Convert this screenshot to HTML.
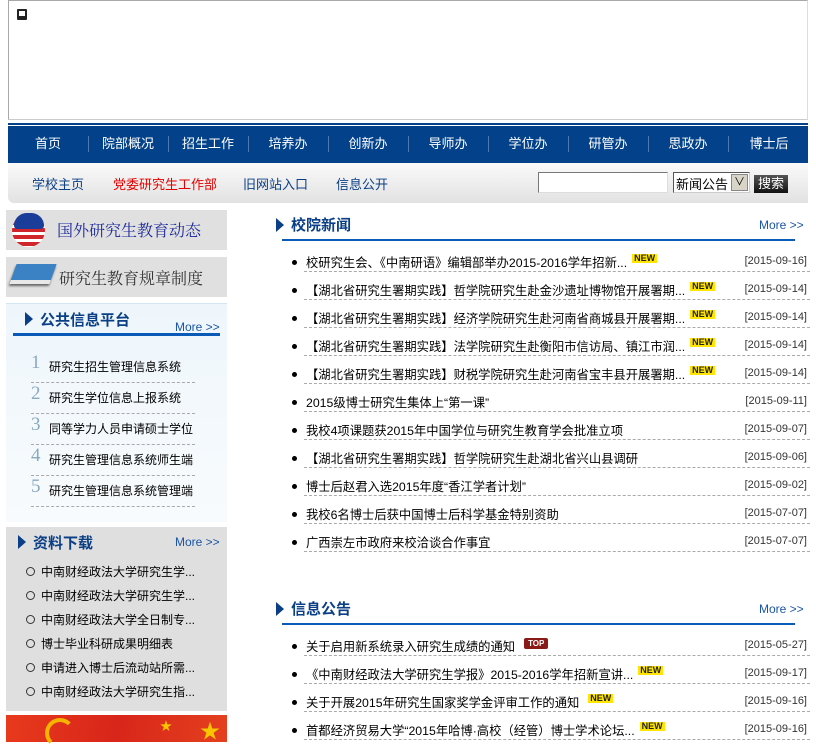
<!DOCTYPE html>
<html><head><meta charset="utf-8">
<style>
*{margin:0;padding:0;box-sizing:border-box}
body{width:816px;height:742px;overflow:hidden;background:#fff;font-family:"Liberation Sans","Noto Sans CJK SC",sans-serif;font-size:12px;color:#000;position:relative}
.a{position:absolute;white-space:nowrap}
.nav{position:absolute;left:8px;top:126px;width:800px;height:37px;background:#03428a;border-top:0}
.nav span{position:absolute;top:7px;color:#fff;font-size:13px;transform:translateX(-50%)}
.nav i{position:absolute;top:10px;width:1px;height:16px;background:#4d79ad}
.sub{position:absolute;left:8px;top:163px;width:800px;height:40px;background:linear-gradient(#fafafa,#e2e2e2);border-bottom-left-radius:6px}
.sub span{position:absolute;top:11px;font-size:13px;color:#0a3f86}
.hd{position:absolute;font-size:15px;font-weight:bold;color:#0a3f86}
.tri{position:absolute;width:0;height:0;border-top:7px solid transparent;border-bottom:7px solid transparent;border-left:8px solid #0a3f86}
.more{position:absolute;font-size:12px;color:#1a55a6}
.bl{position:absolute;height:3px;background:#0a5ab7}
.row{position:absolute;left:292px;width:518px;height:28px}
.row .dot{position:absolute;left:0;top:7px;width:5px;height:5px;border-radius:50%;background:#000}
.row .t{position:absolute;left:14px;top:0px;font-size:12.3px;white-space:nowrap}
.row .d{position:absolute;right:3px;top:2px;font-size:11px;color:#333}
.row .ln{position:absolute;left:12px;right:0;top:18px;border-top:1px dashed #aaa}
.new{display:inline-block;font-size:9px;font-weight:bold;font-style:normal;color:#222;background:#ffe500;line-height:9px;padding:0 2px;vertical-align:top;margin-left:5px;margin-top:1px}
.top{display:inline-block;font-size:8px;font-weight:bold;font-style:normal;color:#fff;background:#8a1a16;border-radius:2px;line-height:11px;padding:0 4px;vertical-align:top;margin-left:9px;margin-top:1px}
.pi{position:absolute;left:31px;width:164px;height:31px;border-bottom:1px dashed #aaa}
.pi b{position:absolute;left:0;top:0px;font-family:"Liberation Serif",serif;font-size:19px;font-weight:normal;color:#8aa9c0}
.pi span{position:absolute;left:18px;top:6px;font-size:12px}
.dl{position:absolute;left:26px;font-size:12px}
.dl::before{content:"";position:absolute;left:0;top:1px;width:7px;height:7px;border:1px solid #333;border-radius:50%}
.dl span{position:absolute;left:15px;top:-3px;white-space:nowrap}
</style></head><body>
<div class="a" style="left:8px;top:0;width:800px;height:120px;border:1px solid #a8a8a8;border-right-color:#ddd;border-bottom-color:#ccc"></div>
<div class="a" style="left:17px;top:9px;width:10px;height:11px;border:2px solid #222;border-bottom-width:4px;border-radius:1px"></div>
<div class="a" style="left:8px;top:123px;width:800px;height:2px;background:#03428a"></div>
<div class="nav">
<span style="left:40px">首页</span><i style="left:80px"></i>
<span style="left:120px">院部概况</span><i style="left:160px"></i>
<span style="left:200px">招生工作</span><i style="left:240px"></i>
<span style="left:280px">培养办</span><i style="left:320px"></i>
<span style="left:360px">创新办</span><i style="left:400px"></i>
<span style="left:440px">导师办</span><i style="left:480px"></i>
<span style="left:520px">学位办</span><i style="left:560px"></i>
<span style="left:600px">研管办</span><i style="left:640px"></i>
<span style="left:680px">思政办</span><i style="left:720px"></i>
<span style="left:761px">博士后</span>
</div>
<div class="sub">
<span style="left:24px">学校主页</span>
<span style="left:105px;color:#e60000">党委研究生工作部</span>
<span style="left:235px">旧网站入口</span>
<span style="left:328px">信息公开</span>
</div>
<div class="a" style="left:538px;top:172px;width:130px;height:21px;background:#fff;border:1px solid #777;border-right-color:#ddd;border-bottom-color:#ddd"></div>
<div class="a" style="left:673px;top:172px;width:77px;height:21px;background:#fff;border:1px solid #555;border-right-color:#ccc;border-bottom-color:#ccc;font-size:13px;padding:1px 0 0 2px">新闻公告</div>
<div class="a" style="left:731px;top:174px;width:17px;height:17px;background:#d8d4c8;border:1px solid #888;font-size:11px;text-align:center;line-height:15px">∨</div>
<div class="a" style="left:754px;top:175px;width:34px;height:18px;background:linear-gradient(#555,#111);color:#fff;font-size:13px;text-align:center;line-height:18px">搜索</div>

<div class="a" style="left:6px;top:210px;width:221px;height:40px;background:#e0e0e0"></div>
<div class="a" style="left:12px;top:214px;width:33px;height:33px;border-radius:50%;background:repeating-linear-gradient(#d0252a 0 4px,#fff 4px 7px)"></div>
<div class="a" style="left:14px;top:213px;width:30px;height:16px;border-radius:15px 15px 4px 4px;background:#1b3d9a"></div>
<div class="a" style="left:57px;top:218px;font-size:16px;color:#1d2a9a;font-family:'Noto Serif CJK SC',serif">国外研究生教育动态</div>
<div class="a" style="left:6px;top:257px;width:221px;height:40px;background:#e0e0e0"></div>
<div class="a" style="left:13px;top:264px;width:40px;height:20px;background:#3a82c4;transform:skewX(-20deg);border-bottom:4px solid #e8e8e8;box-shadow:0 2px 2px #666"></div>
<div class="a" style="left:59px;top:266px;font-size:16px;color:#333;font-family:'Noto Serif CJK SC',serif">研究生教育规章制度</div>
<div class="a" style="left:6px;top:303px;width:221px;height:219px;background:linear-gradient(#eef6fc,#f8fbfd);border-top:1px solid #d5e6f2"></div>
<div class="tri" style="left:25px;top:312px"></div>
<div class="hd" style="left:40px;top:309px">公共信息平台</div>
<div class="more" style="left:175px;top:320px">More &gt;&gt;</div>
<div class="bl" style="left:13px;top:333px;width:207px;height:3px"></div>
<div class="pi" style="top:352px"><b>1</b><span>研究生招生管理信息系统</span></div>
<div class="pi" style="top:383px"><b>2</b><span>研究生学位信息上报系统</span></div>
<div class="pi" style="top:414px"><b>3</b><span>同等学力人员申请硕士学位</span></div>
<div class="pi" style="top:445px"><b>4</b><span>研究生管理信息系统师生端</span></div>
<div class="pi" style="top:476px"><b>5</b><span>研究生管理信息系统管理端</span></div>

<div class="a" style="left:6px;top:527px;width:221px;height:184px;background:#dfdfdf"></div>
<div class="tri" style="left:18px;top:535px"></div>
<div class="hd" style="left:33px;top:532px">资料下载</div>
<div class="more" style="left:175px;top:535px">More &gt;&gt;</div>
<div class="dl" style="top:566px"><span>中南财经政法大学研究生学...</span></div>
<div class="dl" style="top:590px"><span>中南财经政法大学研究生学...</span></div>
<div class="dl" style="top:614px"><span>中南财经政法大学全日制专...</span></div>
<div class="dl" style="top:638px"><span>博士毕业科研成果明细表</span></div>
<div class="dl" style="top:662px"><span>申请进入博士后流动站所需...</span></div>
<div class="dl" style="top:686px"><span>中南财经政法大学研究生指...</span></div>
<div class="a" style="left:6px;top:715px;width:221px;height:27px;background:linear-gradient(100deg,#e83a1c,#d8261a 50%,#e4401e)"></div>
<div class="a" style="left:45px;top:718px;width:30px;height:30px;border-radius:50%;border:4px solid #f5b400;border-right-color:transparent;border-bottom-color:transparent"></div>
<div class="a" style="left:160px;top:717px;color:#f7c600;font-size:12px">★</div>
<div class="a" style="left:200px;top:715px;color:#f7c600;font-size:20px">★</div>

<div class="tri" style="left:276px;top:218px"></div>
<div class="hd" style="left:291px;top:214px">校院新闻</div>
<div class="more" style="left:759px;top:218px">More &gt;&gt;</div>
<div class="bl" style="left:282px;top:239px;width:513px;height:2px"></div>

<div class="row" style="top:253px"><i class="dot"></i><span class="t">校研究生会、《中南研语》编辑部举办2015-2016学年招新...<em class="new">NEW</em></span><span class="d">[2015-09-16]</span><i class="ln"></i></div>
<div class="row" style="top:281px"><i class="dot"></i><span class="t">【湖北省研究生署期实践】哲学院研究生赴金沙遗址博物馆开展署期...<em class="new">NEW</em></span><span class="d">[2015-09-14]</span><i class="ln"></i></div>
<div class="row" style="top:309px"><i class="dot"></i><span class="t">【湖北省研究生署期实践】经济学院研究生赴河南省商城县开展署期...<em class="new">NEW</em></span><span class="d">[2015-09-14]</span><i class="ln"></i></div>
<div class="row" style="top:337px"><i class="dot"></i><span class="t">【湖北省研究生署期实践】法学院研究生赴衡阳市信访局、镇江市润...<em class="new">NEW</em></span><span class="d">[2015-09-14]</span><i class="ln"></i></div>
<div class="row" style="top:365px"><i class="dot"></i><span class="t">【湖北省研究生署期实践】财税学院研究生赴河南省宝丰县开展署期...<em class="new">NEW</em></span><span class="d">[2015-09-14]</span><i class="ln"></i></div>
<div class="row" style="top:393px"><i class="dot"></i><span class="t">2015级博士研究生集体上“第一课”</span><span class="d">[2015-09-11]</span><i class="ln"></i></div>
<div class="row" style="top:421px"><i class="dot"></i><span class="t">我校4项课题获2015年中国学位与研究生教育学会批准立项</span><span class="d">[2015-09-07]</span><i class="ln"></i></div>
<div class="row" style="top:449px"><i class="dot"></i><span class="t">【湖北省研究生署期实践】哲学院研究生赴湖北省兴山县调研</span><span class="d">[2015-09-06]</span><i class="ln"></i></div>
<div class="row" style="top:477px"><i class="dot"></i><span class="t">博士后赵君入选2015年度“香江学者计划”</span><span class="d">[2015-09-02]</span><i class="ln"></i></div>
<div class="row" style="top:505px"><i class="dot"></i><span class="t">我校6名博士后获中国博士后科学基金特别资助</span><span class="d">[2015-07-07]</span><i class="ln"></i></div>
<div class="row" style="top:533px"><i class="dot"></i><span class="t">广西崇左市政府来校洽谈合作事宜</span><span class="d">[2015-07-07]</span><i class="ln"></i></div>

<div class="tri" style="left:276px;top:602px"></div>
<div class="hd" style="left:291px;top:598px">信息公告</div>
<div class="more" style="left:759px;top:602px">More &gt;&gt;</div>
<div class="bl" style="left:282px;top:623px;width:513px;height:2px"></div>
<div class="row" style="top:637px"><i class="dot"></i><span class="t">关于启用新系统录入研究生成绩的通知<em class="top">TOP</em></span><span class="d">[2015-05-27]</span><i class="ln"></i></div>
<div class="row" style="top:665px"><i class="dot"></i><span class="t">《中南财经政法大学研究生学报》2015-2016学年招新宣讲...<em class="new">NEW</em></span><span class="d">[2015-09-17]</span><i class="ln"></i></div>
<div class="row" style="top:693px"><i class="dot"></i><span class="t">关于开展2015年研究生国家奖学金评审工作的通知<em class="new" style="margin-left:9px">NEW</em></span><span class="d">[2015-09-16]</span><i class="ln"></i></div>
<div class="row" style="top:721px"><i class="dot"></i><span class="t">首都经济贸易大学“2015年哈博·高校（经管）博士学术论坛...<em class="new">NEW</em></span><span class="d">[2015-09-16]</span><i class="ln"></i></div>
</body></html>
